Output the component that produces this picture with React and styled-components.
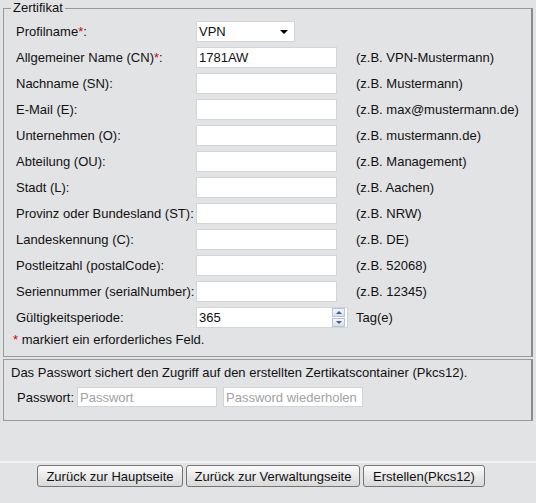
import React from 'react';
import styled, { createGlobalStyle } from 'styled-components';

const GlobalStyle = createGlobalStyle`
  html, body {
    margin: 0;
    padding: 0;
    background: #e2e3e5;
  }
  body {
    font-family: "Liberation Sans", Arial, sans-serif;
    font-size: 13px;
    color: #111;
  }
`;

const Page = styled.div`
  width: 536px;
  height: 503px;
  display: flex;
  flex-direction: column;
  box-sizing: border-box;
  padding: 0 3px;
`;

const CertSet = styled.fieldset`
  margin: 0;
  padding: 5px 12px 9px 12px;
  border: 1px solid #9a9a9a;
  border-right: 2px solid #8a8a8a;
  min-width: 0;
`;

const Legend = styled.legend`
  margin-left: -5px;
  padding: 0 2px;
  line-height: 16px;
`;

const FormGrid = styled.div`
  display: grid;
  grid-template-columns: 180px 160px 1fr;
  grid-auto-rows: 21px;
  row-gap: 5px;
  align-items: center;
`;

const Label = styled.span`
  white-space: nowrap;
`;

const Req = styled.span`
  color: #e00000;
`;

const Hint = styled.span`
  white-space: nowrap;
`;

const TextInput = styled.input`
  box-sizing: border-box;
  width: ${({ $w }) => $w || 141}px;
  height: ${({ $h }) => $h || 21}px;
  border: 1px solid #d3d4d6;
  background: #fff;
  padding: 0 2px;
  font-family: inherit;
  font-size: 13px;
  color: #111;
  outline: none;
  &::placeholder {
    color: #a2a2a2;
  }
`;

const SelectBox = styled.div`
  box-sizing: border-box;
  width: 99px;
  height: 21px;
  border: 1px solid #d3d4d6;
  background: #fff;
  padding: 0 2px;
  display: flex;
  align-items: center;
  justify-content: space-between;
`;

const Caret = styled.span`
  width: 0;
  height: 0;
  margin-right: 4px;
  border-left: 4px solid transparent;
  border-right: 4px solid transparent;
  border-top: 4px solid #000;
`;

const SpinField = styled.div`
  box-sizing: border-box;
  width: 152px;
  height: 21px;
  border: 1px solid #d3d4d6;
  background: #fff;
  display: flex;
  align-items: center;
  padding: 0 2px 0 2px;
  & > span {
    flex: 1;
  }
`;

const SpinButtons = styled.div`
  display: flex;
  flex-direction: column;
  gap: 1px;
`;

const SpinBtn = styled.div`
  box-sizing: border-box;
  width: 13px;
  height: 9px;
  border: 1px solid #b9c3d3;
  background: linear-gradient(#f4f6fa, #d7dee9);
  display: flex;
  align-items: center;
  justify-content: center;
  &::after {
    content: '';
    width: 0;
    height: 0;
    border-left: 3px solid transparent;
    border-right: 3px solid transparent;
    ${({ $down }) =>
      $down ? 'border-top: 3px solid #3c5c96;' : 'border-bottom: 3px solid #3c5c96;'}
  }
`;

const Note = styled.div`
  margin-top: 4px;
  margin-left: -3px;
  line-height: 15px;
`;

const PassBox = styled.div`
  margin-top: 2px;
  border: 1px solid #9a9a9a;
  border-right: 2px solid #8a8a8a;
  padding: 5px 7px 13px 7px;
`;

const PassText = styled.div`
  line-height: 15px;
`;

const PassRow = styled.div`
  margin-top: 7px;
  padding-left: 6px;
  display: flex;
  align-items: center;
  gap: 6px;
`;

const PassLabel = styled.span`
  width: 54px;
`;

const Footer = styled.div`
  margin: auto -3px 0;
  border-top: 2px solid #f1f2f3;
  padding: 2px 0 16px 37px;
  display: flex;
  gap: 3px;
`;

const Button = styled.button`
  box-sizing: border-box;
  width: ${({ $w }) => $w}px;
  height: 22px;
  border: 1px solid #767676;
  border-radius: 3px;
  background: linear-gradient(#fbfbfb, #e6e6e6 60%, #d9d9d9);
  font-family: inherit;
  font-size: 13px;
  color: #111;
  padding: 0;
`;

const fields = [
  { label: 'Allgemeiner Name (CN)', req: true, value: '1781AW', hint: '(z.B. VPN-Mustermann)' },
  { label: 'Nachname (SN)', hint: '(z.B. Mustermann)' },
  { label: 'E-Mail (E)', hint: '(z.B. max@mustermann.de)' },
  { label: 'Unternehmen (O)', hint: '(z.B. mustermann.de)' },
  { label: 'Abteilung (OU)', hint: '(z.B. Management)' },
  { label: 'Stadt (L)', hint: '(z.B. Aachen)' },
  { label: 'Provinz oder Bundesland (ST)', hint: '(z.B. NRW)' },
  { label: 'Landeskennung (C)', hint: '(z.B. DE)' },
  { label: 'Postleitzahl (postalCode)', hint: '(z.B. 52068)' },
  { label: 'Seriennummer (serialNumber)', hint: '(z.B. 12345)' },
];

export default function App() {
  return (
    <>
      <GlobalStyle />
      <Page>
        <CertSet>
          <Legend>Zertifikat</Legend>
          <FormGrid>
            <Label>Profilname<Req>*</Req>:</Label>
            <SelectBox>
              <span>VPN</span>
              <Caret />
            </SelectBox>
            <span />

            {fields.map((f) => (
              <React.Fragment key={f.label}>
                <Label>
                  {f.label}
                  {f.req && <Req>*</Req>}:
                </Label>
                <TextInput defaultValue={f.value || ''} />
                <Hint>{f.hint}</Hint>
              </React.Fragment>
            ))}

            <Label>Gültigkeitsperiode:</Label>
            <SpinField>
              <span>365</span>
              <SpinButtons>
                <SpinBtn />
                <SpinBtn $down />
              </SpinButtons>
            </SpinField>
            <Hint>Tag(e)</Hint>
          </FormGrid>
          <Note>
            <Req>*</Req> markiert ein erforderliches Feld.
          </Note>
        </CertSet>

        <PassBox>
          <PassText>
            Das Passwort sichert den Zugriff auf den erstellten Zertikatscontainer (Pkcs12).
          </PassText>
          <PassRow>
            <PassLabel>Passwort:</PassLabel>
            <TextInput $w={140} $h={20} placeholder="Passwort" />
            <TextInput $w={140} $h={20} placeholder="Password wiederholen" />
          </PassRow>
        </PassBox>

        <Footer>
          <Button $w={146}>Zurück zur Hauptseite</Button>
          <Button $w={174}>Zurück zur Verwaltungseite</Button>
          <Button $w={122}>Erstellen(Pkcs12)</Button>
        </Footer>
      </Page>
    </>
  );
}
